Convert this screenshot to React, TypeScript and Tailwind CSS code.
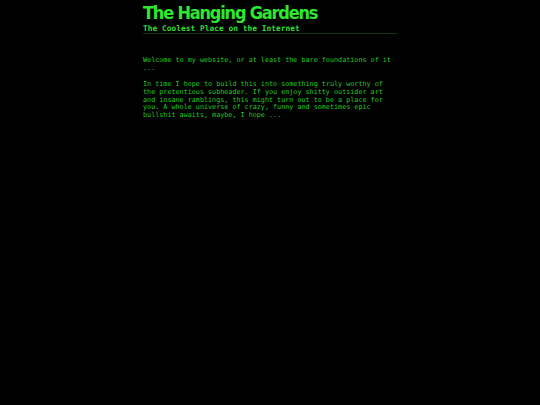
import React from "react";

export default function App() {
  return (
    <div className="min-h-screen w-full bg-black">
      <div className="mx-auto w-[254px] pt-[2px]">
        <header className="border-b border-[#0f3a0f]">
          <h1 className="font-['DejaVu_Sans_Condensed','DejaVu_Sans',sans-serif] font-bold text-[18px] leading-[22px] tracking-[-1.2px] text-[#2ee82e]">
            The Hanging Gardens
          </h1>
          <h2 className="font-['DejaVu_Sans_Mono',monospace] font-bold text-[7.9px] leading-[9px] text-[#33dd33]">
            The Coolest Place on the Internet
          </h2>
        </header>
        <main className="pt-[23px] font-['DejaVu_Sans_Mono',monospace] text-[6.75px] leading-[7.9px] text-[#22cc22]">
          <p>Welcome to my website, or at least the bare foundations of it ...</p>
          <p className="mt-[7.9px]">
            In time I hope to build this into something truly worthy of the pretentious subheader. If you
            enjoy shitty outsider art and insane ramblings, this might turn out to be a place for you. A
            whole universe of crazy, funny and sometimes epic bullshit awaits, maybe, I hope ...
          </p>
        </main>
      </div>
    </div>
  );
}
